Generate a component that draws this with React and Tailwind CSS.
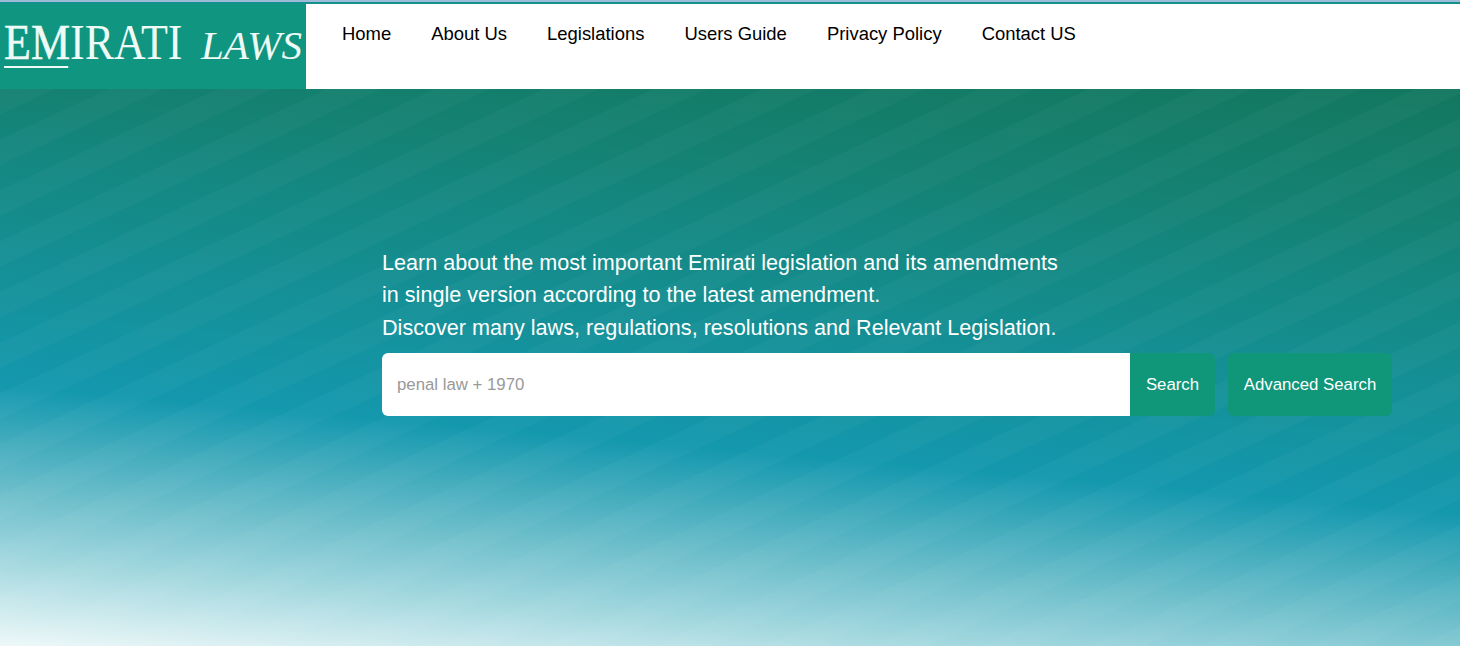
import React from "react";

const navLinks = ["Home", "About Us", "Legislations", "Users Guide", "Privacy Policy", "Contact US"];

const App = () => {
    return (
        <div className="h-[646px] w-full overflow-hidden font-['Liberation_Sans',Arial,sans-serif] flex flex-col">
            {/* thin strip at the very top */}
            <div className="h-[2px] bg-[#9fbcd6]"></div>
            <div className="h-[2px] bg-[#14908f]"></div>

            <header className="h-[85px] flex bg-white shrink-0">
                <a className="w-[306px] h-full bg-[#109680] flex items-start pl-[4px] pt-[9px] font-['Liberation_Serif',serif] text-[#eefaf6] whitespace-nowrap">
                    <span className="w-[177px] shrink-0">
                        <span className="inline-flex origin-left scale-x-[0.88] text-[50px] leading-[58px]">
                            <span className="relative [-webkit-text-stroke:0.5px_#eefaf6]">
                                EM
                                <span className="absolute left-0 top-[53px] w-[73px] h-[2px] bg-[#eefaf6]"></span>
                            </span>
                            <span>IRATI</span>
                        </span>
                    </span>
                    <span className="ml-[20px] mt-[3px] text-[41px] leading-[58px] italic">LAWS</span>
                </a>
                <nav className="flex items-start gap-10 pl-9 pt-[19px] text-[18.45px] leading-[21px] text-black">
                    {navLinks.map((link) => (
                        <a key={link} className="whitespace-nowrap">{link}</a>
                    ))}
                </nav>
            </header>

            <main className="flex-1 pl-[382px] pt-[157.75px] bg-[repeating-linear-gradient(155deg,rgba(255,255,255,0.028)_0px,rgba(255,255,255,0.028)_22px,rgba(255,255,255,0)_24px,rgba(255,255,255,0)_46px),linear-gradient(185deg,#13775f_0%,#14806f_16%,#148c8c_37%,#1498ae_62%,#5fb8c6_75%,#a6d9e0_88%,#f4fbfb_101%)]">
                <p className="text-[21.6px] leading-[32.5px] text-white">
                    Learn about the most important Emirati legislation and its amendments
                    <br />
                    in single version according to the latest amendment.
                    <br />
                    Discover many laws, regulations, resolutions and Relevant Legislation.
                </p>
                <form className="flex mt-[9px] h-[63px]">
                    <input
                        type="text"
                        placeholder="penal law + 1970"
                        className="w-[748px] h-full bg-white rounded-l-md pl-[15px] text-[16.8px] outline-none placeholder:text-[#999]"
                    />
                    <button type="button" className="w-[85px] h-full bg-[#109679] text-white text-[16.8px] rounded-r-md">
                        Search
                    </button>
                    <button type="button" className="ml-[13px] w-[164px] h-full bg-[#109679] text-white text-[16.8px] rounded-md">
                        Advanced Search
                    </button>
                </form>
            </main>
        </div>
    );
};

export default App;
